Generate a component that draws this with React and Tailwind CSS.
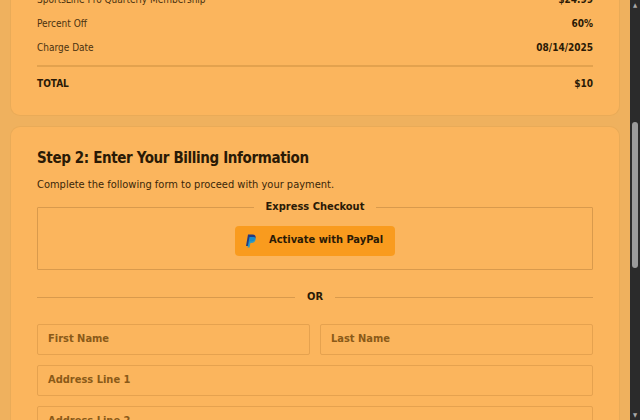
import React from "react";

const font = { fontFamily: '"Liberation Sans Narrow", "DejaVu Sans Condensed", "Liberation Sans", sans-serif' };

function Row({ label, value }) {
  return (
    <div className="flex justify-between items-center h-[24px] text-[10px]">
      <span className="text-[#4a3210]">{label}</span>
      <span className="font-bold text-[#2a1a06]">{value}</span>
    </div>
  );
}

function Input({ placeholder }) {
  return (
    <div className="h-[31px] border border-[#e5a24f] rounded-[2px] flex items-center px-[10px] text-[11px] text-[#8a5a18] font-semibold">
      {placeholder}
    </div>
  );
}

export default function App() {
  return (
    <div className="w-[640px] h-[420px] overflow-hidden flex bg-[#efb15e]" style={font}>
      <div className="flex-1 overflow-hidden px-[10px]">
        <div className="-mt-[13px] bg-[#fbb55d] rounded-b-[10px] border border-t-0 border-[#e9ab58] px-[26px] pb-[20px]">
          <Row label="SportsLine Pro Quarterly Membership" value="$24.99" />
          <Row label="Percent Off" value="60%" />
          <Row label="Charge Date" value="08/14/2025" />
          <div className="h-[2px] bg-[#e3a24e] mt-[6px] mb-[4px]" />
          <div className="flex justify-between items-center h-[24px] text-[10px] font-bold text-[#2a1a06]">
            <span>TOTAL</span>
            <span>$10</span>
          </div>
        </div>
        <div className="mt-[10px] bg-[#fbb55d] rounded-t-[10px] border border-b-0 border-[#e9ab58] px-[26px] pt-[20px]">
          <h2 className="text-[15px] font-bold tracking-tight text-[#2a1a06]">Step 2: Enter Your Billing Information</h2>
          <p className="mt-[7px] text-[11px] text-[#3a2608]">Complete the following form to proceed with your payment.</p>
          <fieldset className="mt-[6px] border border-[#d99a4c] rounded-[1px] h-[71px] flex justify-center pt-[10px]">
            <legend className="mx-auto px-[12px] text-[11px] font-bold text-[#2a1a06]">Express Checkout</legend>
            <button className="w-[160px] h-[30px] rounded-[4px] bg-[#f99b1e] flex items-center gap-[12px] px-[10px] text-[11px] font-semibold text-[#2a1a06]">
              <svg width="12" height="14" viewBox="0 0 24 28">
                <path d="M6 1h9c5 0 7 3 6 7-1 5-4 7-9 7H9l-2 9H2z" fill="#253b80" />
                <path d="M9 6h8c4 0 5 3 4 6-1 4-4 6-8 6h-2l-2 9H5z" fill="#179bd7" opacity="0.85" />
              </svg>
              Activate with PayPal
            </button>
          </fieldset>
          <div className="mt-[19px] flex items-center gap-[12px]">
            <div className="flex-1 h-px bg-[#d99a4c]" />
            <span className="text-[11px] font-bold text-[#2a1a06]">OR</span>
            <div className="flex-1 h-px bg-[#d99a4c]" />
          </div>
          <div className="mt-[18px] grid grid-cols-2 gap-[10px]">
            <Input placeholder="First Name" />
            <Input placeholder="Last Name" />
          </div>
          <div className="mt-[10px]"><Input placeholder="Address Line 1" /></div>
          <div className="mt-[10px]"><Input placeholder="Address Line 2" /></div>
        </div>
      </div>
      <div className="w-[10px] bg-[#2b2b2b] flex flex-col items-center">
        <div className="text-[6px] text-[#aaa] leading-[10px]">▲</div>
        <div className="mt-[112px] w-[6px] h-[146px] rounded bg-[#9b9b9b]" />
        <div className="mt-auto text-[6px] text-[#aaa] leading-[10px]">▼</div>
      </div>
    </div>
  );
}
